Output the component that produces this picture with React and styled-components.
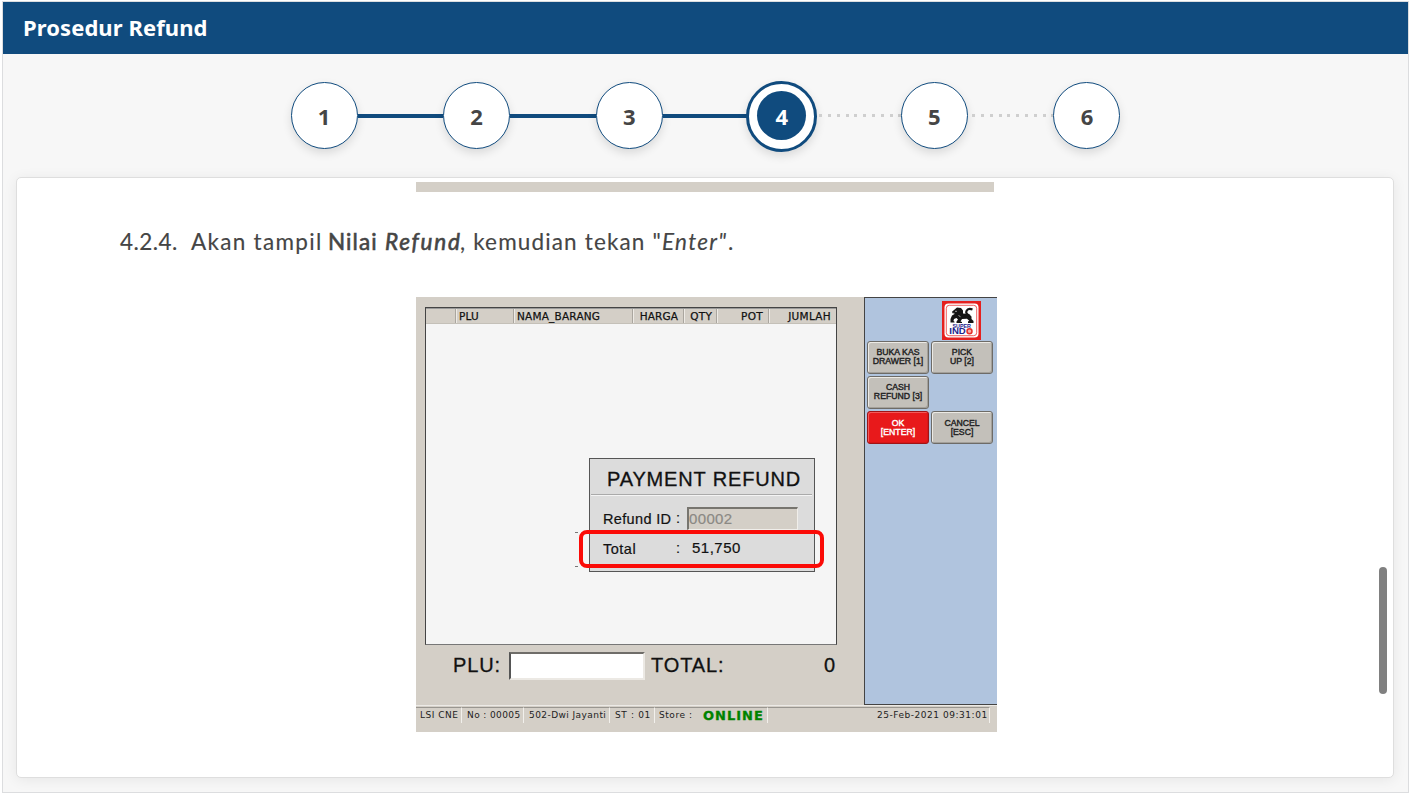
import React from "react";
import styled, { createGlobalStyle } from "styled-components";

const GlobalStyle = createGlobalStyle`
  *, *::before, *::after { box-sizing: border-box; }
  body { margin: 0; background: #fff; }
`;

const Frame = styled.div`
  width: 1407px;
  height: 792px;
  margin: 1px 0 0 2px;
  border: 1px solid #dcdddf;
  background: #f7f7f7;
  color: #454545;
  font-family: "Noto Sans", sans-serif;
  overflow: hidden;
`;

const Header = styled.header`
  height: 52px;
  margin: 0 -1px;
  padding: 0 0 2px 21px;
  display: flex;
  align-items: center;
  background: #104b7e;
  color: #fff;
  font-size: 22px;
  font-weight: 700;
  letter-spacing: 0.08px;
`;

const Stepper = styled.nav`
  height: 123px;
  display: flex;
  align-items: center;
  justify-content: center;
`;

const Step = styled.div`
  width: 67px;
  height: 67px;
  flex: none;
  display: flex;
  align-items: center;
  justify-content: center;
  border-radius: 50%;
  border: 1.5px solid #104b7e;
  background: #fff;
  font-size: 22px;
  font-weight: 700;
  box-shadow: 0 4px 10px rgba(0, 0, 0, 0.12);
`;

const ActiveStep = styled(Step)`
  width: 71px;
  height: 71px;
  margin: 1px -2px 0;
  border-width: 3.5px;
`;

const ActiveCore = styled.div`
  width: 49px;
  height: 49px;
  margin-bottom: 2px;
  padding-top: 2px;
  display: flex;
  align-items: center;
  justify-content: center;
  border-radius: 50%;
  background: #104b7e;
  color: #fff;
`;

const Line = styled.div`
  width: 85.6px;
  height: ${(p) => (p.$done ? 4 : 3)}px;
  margin-top: ${(p) => (p.$done ? 1 : 0)}px;
  flex: none;
  background: ${(p) =>
    p.$done
      ? "#104b7e"
      : "repeating-linear-gradient(90deg, transparent 0 4.2px, #cfcfcf 4.2px 7.2px, transparent 7.2px 8.8px)"};
`;

const Card = styled.main`
  position: relative;
  width: 1378px;
  height: 601px;
  margin-left: 13px;
  padding: 4px 0 0 399px;
  border: 1px solid #dedede;
  border-radius: 5px;
  background: #fff;
  box-shadow: 0 2px 14px rgba(0, 0, 0, 0.07);
`;

const PreviousShot = styled.div`
  width: 578px;
  height: 9.5px;
  margin-bottom: 0.5px;
  background: #d4cfc7;
`;

const Instruction = styled.p`
  height: 30px;
  margin: 35px 0 40px -296px;
  font-family: Lato, sans-serif;
  font-size: 22.5px;
  line-height: 30px;
  white-space: pre;
  display: flex;
`;

const Phrase = styled.span`
  width: ${(p) => p.$w}px;
  letter-spacing: ${(p) => p.$ls}px;
  font-style: ${(p) => (p.$italic ? "italic" : "normal")};
  -webkit-text-stroke: ${(p) => (p.$strong ? "0.6px #454545" : "0.15px #454545")};
`;

const Scrollbar = styled.div`
  position: absolute;
  right: 6px;
  top: 389px;
  width: 8px;
  height: 127px;
  border-radius: 4px;
  background: #808080;
`;

const Pos = styled.section`
  width: 581px;
  height: 435px;
  background: #d4cfc7;
  color: #111;
  font-family: "Liberation Sans", sans-serif;
`;

const PosBody = styled.div`
  display: flex;
  height: 408px;
`;

const Register = styled.div`
  width: 448px;
  padding: 10px 0 0 9px;
`;

const Sheet = styled.div`
  position: relative;
  width: 412px;
  height: 338px;
  border: 1px solid #444;
  border-bottom-color: #777;
  background: #f5f5f5;
`;

const HeadRow = styled.div`
  height: 16px;
  display: flex;
  border-top: 1px solid #999;
  background: #d4cfc7;
  border-bottom: 1px solid #c4c0b8;
  font: 10.5px/14px "DejaVu Sans", sans-serif;
  -webkit-text-stroke: 0.25px #111;
`;

const HeadCell = styled.div`
  width: ${(p) => p.$w}px;
  padding: 0 ${(p) => p.$pr || 3}px 0 3px;
  text-align: ${(p) => p.$align || "left"};
  white-space: nowrap;
  letter-spacing: ${(p) => p.$ls || 0}px;
  border-right: 1px solid #aaa69f;
  box-shadow: 1px 0 0 #eeebe6;
  &:last-child { border-right: 0; box-shadow: none; }
`;

const Dialog = styled.div`
  position: absolute;
  left: 163px;
  top: 150px;
  width: 226px;
  height: 114px;
  border: 1px solid #555;
  background: #dcdcdc;
`;

const DialogTitle = styled.div`
  height: 36px;
  margin: 0 2px 0 1px;
  padding: 1px 0 0 16px;
  border-bottom: 1px solid #aaa;
  box-shadow: 0 1px 0 #f4f4f4;
  font-size: 20px;
  line-height: 38px;
  letter-spacing: 0.85px;
  white-space: nowrap;
  -webkit-text-stroke: 0.3px #111;
`;

const Field = styled.div`
  height: 22px;
  margin: ${(p) => p.$mt}px 0 0 13px;
  display: flex;
  align-items: center;
  font-size: 14.5px;
  letter-spacing: ${(p) => p.$ls}px;
  -webkit-text-stroke: 0.2px currentColor;
`;

const FieldLabel = styled.span`
  width: 73px;
  padding-top: 2px;
  white-space: nowrap;
`;

const Colon = styled.span`
  width: 11px;
`;

const IdBox = styled.div`
  width: 111px;
  height: 23px;
  margin-top: 1px;
  padding-left: 0;
  border: 1px solid #f0eeea;
  border-top: 2px solid #77756f;
  border-left: 2px solid #77756f;
  background: #d4cfc7;
  color: #8b8984;
  font-size: 15px;
  line-height: 20px;
`;

const Amount = styled.span`
  padding-left: 5px;
  font-size: 15px;
  margin-top: -1px;
`;

const Highlight = styled.div`
  position: absolute;
  left: 153px;
  top: 222px;
  width: 245px;
  height: 38px;
  border: 4px solid #fb0b07;
  border-radius: 8px;
`;

const Tick = styled.div`
  position: absolute;
  left: 149px;
  top: ${(p) => p.$top}px;
  width: 3px;
  height: 1px;
  background: #777;
`;

const Totals = styled.div`
  height: 41px;
  padding: 1px 0 0 28px;
  display: flex;
  align-items: center;
  font-size: 20px;
  letter-spacing: 0.9px;
  -webkit-text-stroke: 0.3px #111;
`;

const TotalLabel = styled.span`
  width: ${(p) => p.$w}px;
`;

const PluInput = styled.div`
  width: 136px;
  height: 28px;
  margin: 1px 6px 0 0;
  border: 2px solid #ece9e4;
  border-top-color: #6f6d69;
  border-left: 2px solid #555;
  background: #fff;
`;

const Side = styled.aside`
  width: 133px;
  padding: 3px 0 0 2px;
  background: #b0c4de;
  border: 1px solid #444;
  border-right: 0;
`;

const LogoWrap = styled.div`
  height: 40px;
  padding-left: 75px;
`;

const Keys = styled.div`
  display: grid;
  grid-template-columns: 62px 62px;
  grid-auto-rows: 33px;
  gap: 2.4px 2px;
`;

const Key = styled.div`
  grid-column: ${(p) => p.$col};
  display: flex;
  align-items: center;
  justify-content: center;
  text-align: center;
  white-space: pre-line;
  font-size: 8.7px;
  line-height: 9px;
  font-weight: 400;
  -webkit-text-stroke: 0.4px currentColor;
  color: ${(p) => (p.$primary ? "#fff" : "#222")};
  background: ${(p) => (p.$primary ? "#e8191b" : "#c3c0ba")};
  border: 1px solid ${(p) => (p.$primary ? "#a01416" : "#6d6b67")};
  border-radius: 3px;
  box-shadow: ${(p) =>
    p.$primary
      ? "inset 1px 1px 0 #f35a5a, inset -1px -1px 0 #d81618"
      : "inset 1px 1px 0 #eceae5, inset -1px -1px 0 #a3a09a"};
`;

const Status = styled.footer`
  height: 27px;
  border-top: 1px solid #eceae6;
  padding: 1px 7px 0 0;
  display: flex;
  font: 9px/15px "DejaVu Sans", sans-serif;
  color: #222;
`;

const StatusCell = styled.div`
  width: ${(p) => p.$w}px;
  height: 16px;
  padding: 0 0 0 ${(p) => p.$pl}px;
  border-top: 1px solid #999690;
  border-right: 1px solid #f2f0ec;
  white-space: nowrap;
  letter-spacing: ${(p) => p.$ls}px;
`;

const StoreCell = styled(StatusCell)`
  display: flex;
`;

const StoreLabel = styled.span`
  width: 48px;
  padding-left: 4px;
  letter-spacing: 0.55px;
`;

const OnlineText = styled.span`
  font-size: 13px;
  line-height: 16px;
  font-weight: 700;
  color: #008200;
  letter-spacing: 1px;
  -webkit-text-stroke: 0.3px #008200;
`;

function Logo() {
  return (
    <svg width="39" height="39" viewBox="0 0 39 39">
      <rect width="39" height="39" fill="#e5201f" />
      <rect x="2.5" y="2.5" width="34" height="34" rx="4" fill="#fff" />
      <rect x="4.3" y="4.3" width="30.4" height="30.4" rx="3" fill="none" stroke="#e5201f" strokeWidth=".7" />
      <path
        d="M12 9l3-2.500 4 .5 2 2.500v3l5.500.5 3 2.500v2.500l2 2v2H26v-1.500l1.200-.8-2.200-2-5 .3-1.500 2.500 1.500.5v1H14.500v-1.500l1.500-2-1.500-1.500-2.500 1-.5 2 1 .8v.7H8.500V18l1.500-3.500 2.500-1.500-2-.8-.5-1.500z"
        fill="#151515"
      />
      <path d="M28 15c-3-1.500-4.500-3-3.500-5s3.500-2.500 6-1.500" fill="none" stroke="#151515" strokeWidth="2.200" />
      <path d="M13 10.300h2M16.500 14.500l2 1.200M10.500 12.300h2" stroke="#fff" strokeWidth=".6" />
      <text x="10.500" y="26.500" fontFamily="Liberation Sans" fontWeight="700" fontSize="5.600" textLength="18.500" lengthAdjust="spacingAndGlyphs" fill="#22228c">SUPER</text>
      <text x="7.300" y="33.300" fontFamily="Liberation Sans" fontWeight="700" fontSize="8.700" textLength="16.500" lengthAdjust="spacingAndGlyphs" fill="#22228c">IND</text>
      <circle cx="27.500" cy="30.200" r="2.500" fill="#f6b0a8" stroke="#e5302b" strokeWidth="1.500" />
    </svg>
  );
}

export default function App() {
  return (
    <>
      <GlobalStyle />
      <Frame>
        <Header>Prosedur Refund</Header>
        <Stepper>
          <Step>1</Step>
          <Line $done />
          <Step>2</Step>
          <Line $done />
          <Step>3</Step>
          <Line $done />
          <ActiveStep>
            <ActiveCore>4</ActiveCore>
          </ActiveStep>
          <Line />
          <Step>5</Step>
          <Line />
          <Step>6</Step>
        </Stepper>
        <Card>
          <PreviousShot />
          <Instruction>
            <Phrase $w={71} $ls={0.45}>4.2.4.</Phrase>
            <Phrase $w={137} $ls={1.3}>Akan tampil</Phrase>
            <Phrase $w={57} $ls={1.1} $strong>Nilai</Phrase>
            <Phrase $w={75} $ls={1.75} $strong $italic>Refund</Phrase>
            <Phrase $w={202} $ls={1.15}>, kemudian tekan "</Phrase>
            <Phrase $w={66} $ls={1.3} $italic>Enter"</Phrase>
            <Phrase $w={8} $ls={0}>.</Phrase>
          </Instruction>
          <Pos>
            <PosBody>
              <Register>
                <Sheet>
                  <HeadRow>
                    <HeadCell $w={30} />
                    <HeadCell $w={58} $ls={0.2}>PLU</HeadCell>
                    <HeadCell $w={119} $ls={0.2}>NAMA_BARANG</HeadCell>
                    <HeadCell $w={51} $align="right" $pr={5} $ls={0.1}>HARGA</HeadCell>
                    <HeadCell $w={33} $align="right" $pr={4} $ls={0.2}>QTY</HeadCell>
                    <HeadCell $w={52} $align="right" $pr={5} $ls={0.3}>POT</HeadCell>
                    <HeadCell $w={67} $align="right" $pr={5} $ls={0.3}>JUMLAH</HeadCell>
                  </HeadRow>
                  <Dialog>
                    <DialogTitle>PAYMENT REFUND</DialogTitle>
                    <Field $mt={12} $ls={0.35}>
                      <FieldLabel>Refund ID</FieldLabel>
                      <Colon>:</Colon>
                      <IdBox>00002</IdBox>
                    </Field>
                    <Field $mt={8} $ls={0.5}>
                      <FieldLabel>Total</FieldLabel>
                      <Colon>:</Colon>
                      <Amount>51,750</Amount>
                    </Field>
                  </Dialog>
                  <Highlight />
                  <Tick $top={224} />
                  <Tick $top={258} />
                </Sheet>
                <Totals>
                  <TotalLabel $w={56}>PLU:</TotalLabel>
                  <PluInput />
                  <TotalLabel $w={173}>TOTAL:</TotalLabel>
                  <span>0</span>
                </Totals>
              </Register>
              <Side>
                <LogoWrap>
                  <Logo />
                </LogoWrap>
                <Keys>
                  <Key $col={1}>{"BUKA KAS\nDRAWER [1]"}</Key>
                  <Key $col={2}>{"PICK\nUP [2]"}</Key>
                  <Key $col={1}>{"CASH\nREFUND [3]"}</Key>
                  <Key $col={1} $primary>{"OK\n[ENTER]"}</Key>
                  <Key $col={2}>{"CANCEL\n[ESC]"}</Key>
                </Keys>
              </Side>
            </PosBody>
            <Status>
              <StatusCell $w={46} $pl={4} $ls={0.5}>LSI CNE</StatusCell>
              <StatusCell $w={62} $pl={5} $ls={0.4}>No : 00005</StatusCell>
              <StatusCell $w={86} $pl={5} $ls={0.43}>502-Dwi Jayanti</StatusCell>
              <StatusCell $w={45} $pl={5} $ls={0.65}>ST : 01</StatusCell>
              <StoreCell $w={113} $pl={0} $ls={0}>
                <StoreLabel>Store :</StoreLabel>
                <OnlineText>ONLINE</OnlineText>
              </StoreCell>
              <StatusCell $w={222} $pl={109} $ls={0.53}>25-Feb-2021 09:31:01</StatusCell>
            </Status>
          </Pos>
          <Scrollbar />
        </Card>
      </Frame>
    </>
  );
}
